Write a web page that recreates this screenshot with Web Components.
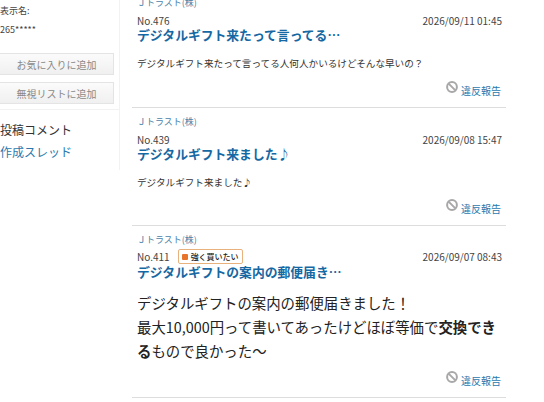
<!DOCTYPE html>
<html lang="ja">
<head>
<meta charset="utf-8">
<title>投稿コメント</title>
<style>
    html, body { margin: 0; padding: 0; background: #fff; overflow: hidden; }
    body { font-family: "Noto Sans CJK JP", "Open Sans", sans-serif; color: #333; }
    #page { display: flex; width: 544px; height: 402px; overflow: hidden; }
</style>
</head>
<body>
<div id="page">
    <user-panel>
        <side-button>お気に入りに追加</side-button>
        <side-button>無視リストに追加</side-button>
    </user-panel>
    <post-list>
        <post-card number="476" date="2026/09/11 01:45" title="デジタルギフト来たって言ってる…" height="111">
            デジタルギフト来たって言ってる人何人かいるけどそんな早いの？
        </post-card>
        <post-card number="439" date="2026/09/08 15:47" title="デジタルギフト来ました♪" height="110">
            デジタルギフト来ました♪
        </post-card>
        <post-card number="411" date="2026/09/07 08:43" title="デジタルギフトの案内の郵便届き…" height="164" large badge="強く買いたい">
            デジタルギフトの案内の郵便届きました！<br>最大10,000円って書いてあったけどほぼ等価で<b>交換できる</b>もので良かった〜
        </post-card>
    </post-list>
</div>

<script>
// Left column: display name, the two buttons and the comment / thread links
class UserPanel extends HTMLElement {
    constructor() {
        super();
        this.attachShadow({ mode: 'open' });
        this.shadowRoot.innerHTML = `
            <style>
                :host { display: block; flex: none; width: 120px; height: 170px; box-sizing: border-box; border-right: 1px solid #f2f2f2; }
                .name { font-size: 9px; line-height: 12px; padding-top: 5px; color: #444; }
                .id { font-size: 9px; line-height: 12px; padding-top: 7px; color: #444; }
                .buttons { display: flex; flex-direction: column; gap: 7px; padding: 17px 5px 0 0; }
                .links { margin-top: 5px; border-top: 1px solid #f2f2f2; padding-top: 9px; font-size: 12px; line-height: 22px; }
                .links a { display: block; color: #333; text-decoration: none; }
                .links a.thread { color: #2b78ad; }
            </style>
            <div class="name">表示名:</div>
            <div class="id">265*****</div>
            <div class="buttons"><slot></slot></div>
            <div class="links">
                <a>投稿コメント</a>
                <a class="thread">作成スレッド</a>
            </div>
        `;
    }
}

class SideButton extends HTMLElement {
    constructor() {
        super();
        this.attachShadow({ mode: 'open' });
        this.shadowRoot.innerHTML = `
            <style>
                :host {
                    display: flex; align-items: center; justify-content: center;
                    height: 22px; box-sizing: border-box;
                    border: 1px solid #e4e4e4; border-left: 0;
                    background: linear-gradient(#fbfbfb, #f0f0f0);
                    color: #888; font-size: 10px;
                }
            </style>
            <slot></slot>
        `;
    }
}

class PostList extends HTMLElement {
    constructor() {
        super();
        this.attachShadow({ mode: 'open' });
        this.shadowRoot.innerHTML = `
            <style>
                :host { display: block; flex: none; width: 374px; margin: -3px 0 0 12px; }
            </style>
            <slot></slot>
        `;
    }
}

// Orange square plus label, shown next to the post number
class SentimentBadge extends HTMLElement {
    constructor() {
        super();
        this.attachShadow({ mode: 'open' });
        this.shadowRoot.innerHTML = `
            <style>
                :host {
                    display: inline-flex; align-items: center; gap: 3px;
                    height: 15px; box-sizing: border-box; padding: 0 3px;
                    border: 1px solid #e8b27c; border-radius: 2px;
                    font-size: 8px; font-weight: 500; color: #222;
                }
                i { width: 6px; height: 6px; border-radius: 1px; background: #e8742a; }
            </style>
            <i></i><slot></slot>
        `;
    }
}

// The grey "no entry" icon with the report link
class ReportLink extends HTMLElement {
    constructor() {
        super();
        this.attachShadow({ mode: 'open' });
        this.shadowRoot.innerHTML = `
            <style>
                :host { display: flex; align-items: center; gap: 3px; font-size: 10px; line-height: 14px; color: #2b78ad; }
                svg { width: 12px; height: 12px; margin-top: -9px; }
            </style>
            <svg viewBox="0 0 12 12" fill="none" stroke="#a8a8a8" stroke-width="2">
                <circle cx="6" cy="6" r="4.9"/>
                <path d="M2.6 2.6l6.8 6.8"/>
            </svg>
            <span>違反報告</span>
        `;
    }
}

class PostCard extends HTMLElement {
    constructor() {
        super();
        this.attachShadow({ mode: 'open' });
    }

    connectedCallback() {
        const badge = this.getAttribute('badge');
        this.shadowRoot.innerHTML = `
            <style>
                :host {
                    display: flex; flex-direction: column; box-sizing: border-box;
                    border-bottom: 1px solid #ddd; padding: 0 0 0 5px; margin-bottom: 8px;
                }
                .company { font-size: 9px; line-height: 12px; color: #4a7fa8; }
                .meta { display: flex; align-items: center; gap: 8px; height: 15px; margin-top: 4px; padding-right: 4px; font-size: 10px; color: #444; }
                .date { margin-left: auto; }
                .title { margin-top: -1px; font-size: 12.8px; line-height: 16px; font-weight: 700; color: #1668a3; white-space: nowrap; }
                .body { flex: 1; margin-top: 13px; font-size: 9.6px; line-height: 14px; color: #333; }
                :host([large]) .meta { margin-top: 3px; }
                :host([large]) .title { margin-top: 0; }
                :host([large]) .body { margin-top: 11px; padding-right: 8px; font-size: 14.4px; line-height: 24px; color: #222; }
                report-link { align-self: flex-end; margin: 0 5px 9px 0; }
            </style>
            <div class="company">Ｊトラスト(株)</div>
            <div class="meta">
                <span>No.${this.getAttribute('number')}</span>
                ${badge ? `<sentiment-badge>${badge}</sentiment-badge>` : ''}
                <span class="date">${this.getAttribute('date')}</span>
            </div>
            <div class="title">${this.getAttribute('title')}</div>
            <div class="body"><slot></slot></div>
            <report-link></report-link>
        `;
        this.style.height = this.getAttribute('height') + 'px';
    }
}

customElements.define('user-panel', UserPanel);
customElements.define('side-button', SideButton);
customElements.define('post-list', PostList);
customElements.define('sentiment-badge', SentimentBadge);
customElements.define('report-link', ReportLink);
customElements.define('post-card', PostCard);
</script>
</body>
</html>
